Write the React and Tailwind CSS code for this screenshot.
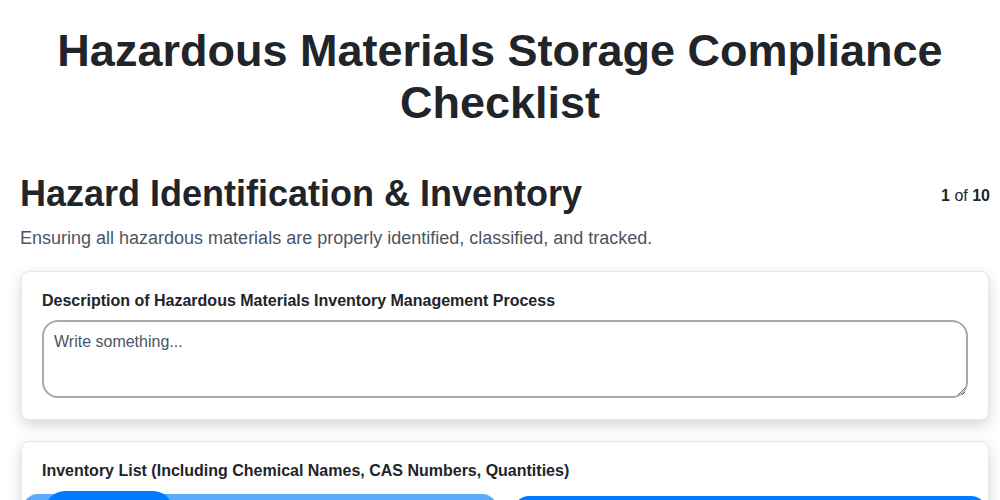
import React from 'react';

const App = () => {
  return (
    <div className="min-h-screen bg-white text-[#212529] font-['Liberation_Sans',Arial,sans-serif]">
      {/* Title */}
      <h1 className="pt-[25px] px-10 text-center text-[45px] leading-[52px] font-bold">
        Hazardous Materials Storage Compliance Checklist
      </h1>

      <div className="pl-5 pr-[10px] pt-[43px]">
        {/* Section header */}
        <div className="flex items-start justify-between">
          <h2 className="text-[36px] leading-[44px] font-bold">Hazard Identification &amp; Inventory</h2>
          <div className="pt-[12px] text-base">
            <span className="font-bold">1</span> of <span className="font-bold">10</span>
          </div>
        </div>
        <p className="mt-[8px] text-lg text-[#4b5563]">
          Ensuring all hazardous materials are properly identified, classified, and tracked.
        </p>

        {/* Card 1 */}
        <div className="mt-[19px] mx-px rounded-lg border border-[#e5e7eb] bg-white px-5 pt-[19px] pb-[21px] shadow-[0_5px_14px_rgba(0,0,0,0.17)]">
          <label className="block text-base font-bold leading-5">
            Description of Hazardous Materials Inventory Management Process
          </label>
          <textarea
            className="mt-[9px] block w-full h-[78px] rounded-2xl border-2 border-[#a3acb5] px-[10px] py-[8px] text-base text-[#212529] placeholder:text-[#4b5563] resize-y"
            placeholder="Write something..."
          />
        </div>

        {/* Card 2 */}
        <div className="mt-[21px] mx-px rounded-lg border border-[#e5e7eb] bg-white pt-[19px] shadow-[0_5px_14px_rgba(0,0,0,0.17)]">
          <label className="block px-5 text-base font-bold leading-5">
            Inventory List (Including Chemical Names, CAS Numbers, Quantities)
          </label>
          <div className="mt-[13px] grid grid-cols-2 gap-[15px]">
            <div className="relative h-[60px] rounded-t-2xl bg-[#5aabff]">
              <div className="absolute left-[23px] top-[-3px] h-[60px] w-[128px] rounded-t-[20px] bg-[#007bff]" />
            </div>
            <div className="mt-[2px] h-[60px] rounded-t-2xl bg-[#007bff] mr-px" />
          </div>
        </div>
      </div>
    </div>
  );
};

export default App;
